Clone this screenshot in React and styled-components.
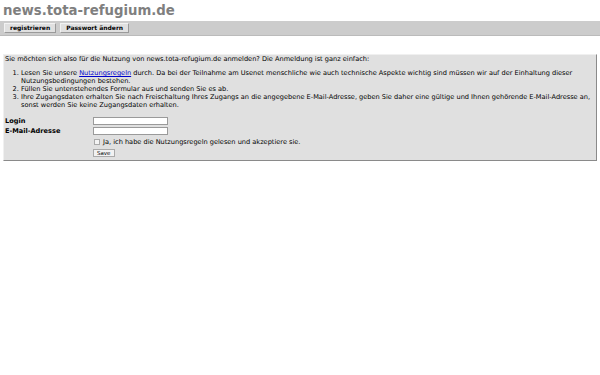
import React from "react";
import styled, { createGlobalStyle } from "styled-components";

const Global = createGlobalStyle`
  html, body {
    margin: 0;
    padding: 0;
    background: #fff;
  }
  body {
    font-family: "DejaVu Sans", Verdana, sans-serif;
    font-size: 6.6px;
    color: #000;
  }
`;

const Page = styled.div`
  width: 600px;
  padding: 0 3px;
  box-sizing: border-box;
`;

const Title = styled.h1`
  margin: 0;
  padding-top: 1px;
  font-size: 13.3px;
  line-height: 20px;
  font-weight: bold;
  color: #7f7f7f;
`;

const NavBar = styled.div`
  display: flex;
  gap: 4px;
  margin: 0 -3px;
  padding: 2px 4px;
  background: #cccccc;
  border-bottom: 1px solid #bbb;
`;

const NavButton = styled.a`
  display: block;
  padding: 0 5px;
  line-height: 8px;
  font-size: 6px;
  font-weight: bold;
  color: #000;
  text-decoration: none;
  background: #e0e0e0;
  border: 1px solid;
  border-color: #f2f2f2 #9a9a9a #9a9a9a #f2f2f2;
`;

const Box = styled.div`
  margin-top: 18px;
  padding: 0 1px 2px 1px;
  background: #e0e0e0;
  border: 1px solid;
  border-color: #f0f0f0 #8a8a8a #8a8a8a #f0f0f0;
`;

const Intro = styled.p`
  margin: 0 0 6px;
  line-height: 8px;
`;

const Steps = styled.ol`
  margin: 0 0 7px;
  padding-left: 16px;
  line-height: 8px;
`;

const Link = styled.a`
  color: #0000cc;
  text-decoration: underline;
`;

const Form = styled.div`
  display: grid;
  grid-template-columns: 88px auto;
  grid-template-rows: 10px 10px 11px 11px;
  align-items: center;
`;

const Label = styled.label`
  font-weight: bold;
`;

const Input = styled.input`
  width: 73px;
  height: 6px;
  padding: 0;
  border: 1px solid #9a9a9a;
  background: #fff;
  box-sizing: content-box;
  font-size: 6px;
`;

const CheckRow = styled.label`
  display: flex;
  align-items: center;
  gap: 3px;
  padding-left: 1px;
`;

const Check = styled.span`
  width: 4px;
  height: 4px;
  border: 1px solid #aaa;
  background: #f4f4f4;
`;

const SaveButton = styled.button`
  justify-self: start;
  font-family: inherit;
  font-size: 5.5px;
  padding: 0 3px;
  height: 8px;
  line-height: 6px;
  background: #f2f2f2;
  border: 1px solid #aaa;
  color: #000;
`;

export default function App() {
  return (
    <Page>
      <Global />
      <Title>news.tota-refugium.de</Title>
      <NavBar>
        <NavButton href="#">registrieren</NavButton>
        <NavButton href="#">Passwort ändern</NavButton>
      </NavBar>
      <Box>
        <Intro>
          Sie möchten sich also für die Nutzung von news.tota-refugium.de anmelden? Die Anmeldung ist ganz einfach:
        </Intro>
        <Steps>
          <li>
            Lesen Sie unsere <Link href="#">Nutzungsregeln</Link> durch. Da bei der Teilnahme am Usenet menschliche wie auch technische Aspekte wichtig sind müssen wir auf der Einhaltung dieser Nutzungsbedingungen bestehen.
          </li>
          <li>Füllen Sie untenstehendes Formular aus und senden Sie es ab.</li>
          <li>
            Ihre Zugangsdaten erhalten Sie nach Freischaltung Ihres Zugangs an die angegebene E-Mail-Adresse, geben Sie daher eine gültige und Ihnen gehörende E-Mail-Adresse an, sonst werden Sie keine Zugangsdaten erhalten.
          </li>
        </Steps>
        <Form>
          <Label>Login</Label>
          <Input type="text" />
          <Label>E-Mail-Adresse</Label>
          <Input type="text" />
          <span />
          <CheckRow>
            <Check />
            Ja, ich habe die Nutzungsregeln gelesen und akzeptiere sie.
          </CheckRow>
          <span />
          <SaveButton>Save</SaveButton>
        </Form>
      </Box>
    </Page>
  );
}
